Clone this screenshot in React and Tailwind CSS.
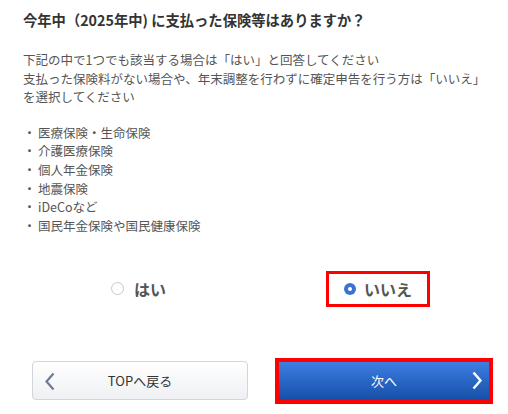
const items = [
  "医療保険・生命保険",
  "介護医療保険",
  "個人年金保険",
  "地震保険",
  "iDeCoなど",
  "国民年金保険や国民健康保険",
];

const App = () => {
  return (
    <div className="w-[508px] h-[414px] bg-white font-['Noto_Sans_CJK_JP','Noto_Sans',sans-serif] pl-[23px] pt-[10px] overflow-hidden">
      <h1 className="text-[14.3px] leading-[20px] font-bold text-[#333]">
        今年中（2025年中) に支払った保険等はありますか？
      </h1>

      <p className="mt-[21px] text-[12.5px] leading-[18.5px] text-[#555]">
        下記の中で1つでも該当する場合は「はい」と回答してください
        <br />
        支払った保険料がない場合や、年末調整を行わずに確定申告を行う方は「いいえ」
        <br />
        を選択してください
      </p>

      <ul className="mt-[17px] text-[12.5px] leading-[18.7px] text-[#555]">
        {items.map((item) => (
          <li key={item} className="flex">
            <span className="w-[13px] shrink-0 text-center">・</span>
            <span className="ml-[2px]">{item}</span>
          </li>
        ))}
      </ul>

      {/* はい / いいえ */}
      <div className="mt-[35px] flex h-[36px] items-center">
        <div className="ml-[88px] flex items-center gap-[10px]">
          <span className="w-[13px] h-[13px] rounded-full border border-[#c8c8c8] bg-white" />
          <span className="text-[16px] font-bold text-[#555]">はい</span>
        </div>
        <div className="ml-[160px] flex h-[36px] w-[104px] items-center justify-center gap-[8px] border-[3px] border-[#ff0000]">
          <span className="flex w-[12px] h-[12px] items-center justify-center rounded-full bg-[#3a74d0]">
            <span className="w-[4px] h-[4px] rounded-full bg-white" />
          </span>
          <span className="text-[16px] font-bold text-[#555]">いいえ</span>
        </div>
      </div>

      {/* ボタン */}
      <div className="mt-[51px] flex items-center">
        <button className="relative ml-[9px] flex h-[39px] w-[216px] items-center justify-center rounded-[4px] border border-[#d2d5da] bg-gradient-to-b from-white to-[#eef0f3] text-[13px] text-[#333]">
          <svg
            className="absolute left-[11px] top-[10px]"
            width="12"
            height="19"
            viewBox="0 0 12 19"
            fill="none"
            stroke="#6e7b91"
            strokeWidth="2.2"
          >
            <path d="M9.5 1.5 L2.5 9.5 L9.5 17.5" />
          </svg>
          TOPへ戻る
        </button>

        <div className="ml-[27px] h-[46px] w-[218px] border-4 border-[#ff0000]">
          <button className="relative flex h-full w-full items-center justify-center bg-gradient-to-b from-[#3d7fe3] to-[#154fa8] text-[13px] text-white">
            次へ
            <svg
              className="absolute right-[6px] top-[9px]"
              width="12"
              height="19"
              viewBox="0 0 12 19"
              fill="none"
              stroke="#ffffff"
              strokeWidth="2.4"
            >
              <path d="M2.5 1.5 L9.5 9.5 L2.5 17.5" />
            </svg>
          </button>
        </div>
      </div>
    </div>
  );
};

export default App;
